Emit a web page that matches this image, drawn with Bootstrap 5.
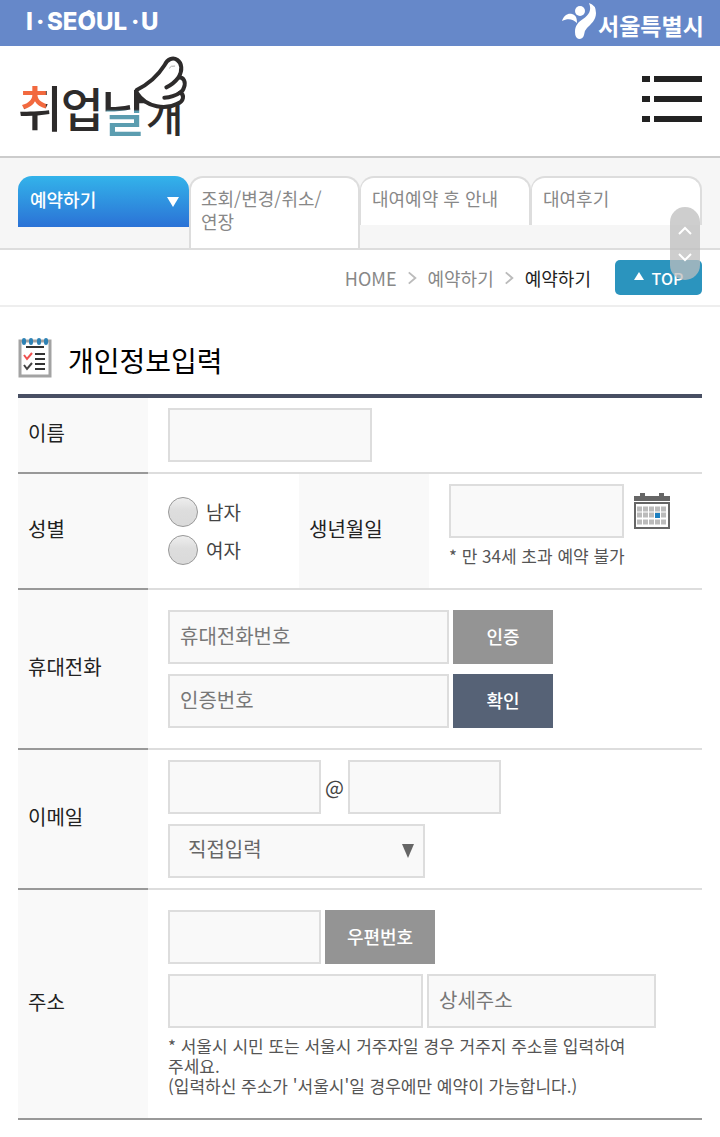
<!DOCTYPE html>
<html lang="ko">
<head>
<meta charset="utf-8">
<meta name="viewport" content="width=device-width, initial-scale=1">
<title>취업날개 - 예약하기</title>
<link href="https://cdn.jsdelivr.net/npm/bootstrap@5.3.0/dist/css/bootstrap.min.css" rel="stylesheet">
<style>
  body { font-family: "Noto Sans CJK KR", sans-serif; font-size: 20px; line-height: 24px; color: #444; background: #fff; }
  a { text-decoration: none; }
  .gutter { padding-left: 18px; padding-right: 18px; }
  .city-bar { background: #6688c9; height: 46px; }
  .city-bar svg, .brand-row svg, .page-title svg, .cal-btn svg { display: block; overflow: visible; }
  .brand-row { height: 112px; border-bottom: 2px solid #ccc; }
  .menu-btn { border: 0; background: none; padding: 0 0 4px; }
  .tab-strip { background: #f6f6f6; border-bottom: 2px solid #ddd; padding-top: 18px; min-height: 92px; }
  .tab-item { flex: 1 1 0; min-height: 49px; padding: 9px 10px; background: #fff; border: 2px solid #ddd; border-bottom: 0; border-radius: 14px 14px 0 0; font-size: 18px; line-height: 23px; color: #888; }
  .tab-item + .tab-item + .tab-item { border-left-width: 1px; padding-left: 11px; }
  .tab-item.tall { min-height: 72px; }
  .tab-item.on { min-height: 51px; border: 0; padding: 12px; color: #fff; font-weight: 500; background: linear-gradient(#33b3ea, #2b72d6); }
  .arrow-down { border: 6px solid transparent; border-top: 10px solid #fff; border-bottom: 0; margin: 9px -2px 0 0; }
  .crumb-row { height: 57px; border-bottom: 2px solid #eee; font-size: 18px; }
  .crumb-row a { color: #888; }
  .crumb-row .now { color: #222; }
  .top-btn { width: 87px; height: 35px; border-radius: 5px; background: #2b94be; color: #fff; font-size: 16px; font-weight: 500; border: 0; }
  .arrow-up { border: 5px solid transparent; border-bottom: 8px solid #fff; border-top: 0; margin-bottom: 4px; }
  .page-title { color: #000; font-size: 28px; font-weight: 400; line-height: 42px; border-bottom: 4px solid #484f63; padding: 30px 0 15px; }
  .page-title span { padding-top: 4px; line-height: 38px; }
  .form-grid { table-layout: fixed; color: #444; }
  .form-grid th { background: #f9f9f9; color: #222; font-weight: 400; padding: 0 10px 4px; vertical-align: middle; border-bottom: 2px solid #ddd; }
  .form-grid th:first-child { border-bottom-color: #999; }
  .form-grid td { padding: 10px 0 10px 20px; vertical-align: middle; border-bottom: 2px solid #ddd; }
  .form-grid td.roomy { padding-top: 20px; padding-bottom: 20px; }
  .form-grid td.birth-cell { padding-bottom: 22px; }
  .form-grid tr:last-child > * { border-bottom-color: #999; }
  .form-grid .form-control, .form-grid .form-select { height: 54px; padding: 0 10px 4px; border: 2px solid #ddd; border-radius: 0; background: #f9f9f9; color: #666; font-size: 20px; flex: 0 1 auto; }
  .form-grid .form-control::placeholder { color: #777; opacity: 1; }
  .form-grid .form-select { padding-left: 18px; }
  .w-name { width: 204px; } .w-birth { width: 175px; } .w-phone { width: 281px; }
  .w-short { width: 153px; } .w-addr { width: 255px; } .w-detail { width: 229px; }
  .line-gap { gap: 4px; }
  .rows-gap { gap: 10px; }
  .act-btn { height: 54px; width: 100px; border: 0; border-radius: 0; background: #949494; color: #fff; font-size: 18px; font-weight: 500; padding: 0 0 2px; }
  .act-btn.wide { width: 110px; }
  .act-btn.dark { background: #566276; }
  .sex-opt { gap: 8px; height: 38px; font-size: 19px; }
  .sex-opt input { appearance: none; width: 30px; height: 30px; margin: 0; border: 1px solid #999; border-radius: 50%; background: linear-gradient(#eee, #ddd 45%, #dadada); }
  .hint { font-size: 17px; line-height: 20px; color: #555; margin: 0; }
  .hint-addr { margin: -2px 0 2px; }
  .pick { width: 257px; }
  .pick .caret { right: 11px; top: 20px; border: 6px solid transparent; border-top: 14px solid #666; border-bottom: 0; pointer-events: none; }
  .cal-btn { border: 0; background: none; padding: 0; }
  .scroll-pill { right: 20px; top: 207px; width: 30px; height: 73px; border-radius: 15px; background: rgba(190,190,190,.75); padding: 19px 0 18px; z-index: 5; }
</style>
</head>
<body>
<div class="city-bar d-flex justify-content-between">
  <a href="#" aria-label="I SEOUL U">
    <svg width="170" height="46" viewBox="0 0 170 46"><text y="30" fill="#fff" font-family="Inter, sans-serif" font-weight="800" font-size="24"><tspan x="26">I</tspan><tspan x="36">·</tspan><tspan x="47">SEOUL</tspan><tspan x="131">·</tspan><tspan x="141">U</tspan></text><path d="M84 14l5-3 5 3" fill="none" stroke="#fff" stroke-width="2"/></svg>
  </a>
  <a href="#" aria-label="서울특별시">
    <svg width="160" height="46" viewBox="0 0 160 46">
      <g fill="#fff"><circle cx="20" cy="11" r="5"/><path d="M2 21C4 15 8 13 12 14C16 15 17 18 17 23C13 19 8 18 2 21Z"/><path d="M29 3Q36 5 36 13C36 20 31 24 27 28Q24 31 24 35Q23 39 19 39Q15 38 15 32C15 26 18 22 23 19C29 15 32 10 29 3Z"/></g>
      <text x="38" y="35" fill="#fff" font-family="Noto Sans CJK KR, sans-serif" font-weight="700" font-size="23">서울특별시</text>
    </svg>
  </a>
</div>

<header class="brand-row gutter d-flex justify-content-between">
  <a href="#" class="mt-2" aria-label="취업날개">
    <svg width="172" height="96" viewBox="54 162 516 288">
      <defs>
        <pattern id="ink" patternUnits="userSpaceOnUse" x="0" y="0" width="700" height="500">
          <rect width="700" height="500" fill="#2d2b2b"/>
          <rect x="40" y="200" width="98" height="127" fill="#f2693f"/>
          <rect x="318" y="331" width="118" height="100" fill="#5b9db0"/>
        </pattern>
      </defs>
      <g fill="url(#ink)" font-family="Noto Sans CJK KR, sans-serif" font-weight="500">
        <text x="54" y="380" font-size="146">취<tspan x="182" font-size="140">업</tspan><tspan x="304" y="395" font-size="150">날</tspan><tspan x="438" y="397" font-size="122">개</tspan></text>
      </g>
      <g fill="#fff" stroke="#2d2b2b" stroke-width="12" stroke-linecap="round" stroke-linejoin="round">
        <path d="M410 270C450 250 475 225 494 195C502 178 518 170 532 180C546 190 548 210 536 232C552 232 558 246 552 262C550 270 545 276 540 278C554 284 552 304 532 311C500 328 440 326 410 278Z"/>
        <path d="M536 232Q520 253 499 262M540 278Q520 292 493 293" fill="none"/>
        <path d="M508 204Q512 196 524 198" fill="none" stroke="#aaa" stroke-width="3"/>
      </g>
    </svg>
  </a>
  <button class="menu-btn" aria-label="메뉴">
    <svg width="60" height="48" viewBox="2 0 60 48" fill="#222"><path d="M2 1h8v6H2zM14 1h48v6H14zM2 21h8v6H2zM14 21h48v6H14zM2 41h8v6H2zM14 41h48v6H14z"/></svg>
  </button>
</header>

<nav class="tab-strip gutter d-flex align-items-start" aria-label="예약 메뉴">
  <a href="#" class="tab-item on d-flex justify-content-between align-items-start">예약하기 <span class="arrow-down"></span></a>
  <a href="#" class="tab-item tall">조회/변경/취소/<br>연장</a>
  <a href="#" class="tab-item">대여예약 후 안내</a>
  <a href="#" class="tab-item">대여후기</a>
</nav>

<div class="crumb-row gutter d-flex justify-content-end align-items-center">
  <a href="#">HOME</a>
  <svg class="mx-2" width="15" height="14" viewBox="0 0 16 14" fill="none" stroke="#bbb" stroke-width="2"><path d="M4 1l7 6-7 6"/></svg>
  <a href="#">예약하기</a>
  <svg class="mx-2" width="15" height="14" viewBox="0 0 16 14" fill="none" stroke="#bbb" stroke-width="2"><path d="M4 1l7 6-7 6"/></svg>
  <a href="#" class="now">예약하기</a>
  <button class="top-btn d-flex align-items-center justify-content-center ms-4 gap-2"><span class="arrow-up"></span>TOP</button>
</div>

<div class="scroll-pill position-absolute d-flex flex-column justify-content-between align-items-center">
  <svg width="14" height="9" viewBox="0 0 14 9" fill="none" stroke="#fff" stroke-width="2"><path d="M1 8l6-6 6 6"/></svg>
  <svg width="14" height="9" viewBox="0 0 14 9" fill="none" stroke="#fff" stroke-width="2"><path d="M1 1l6 6 6-6"/></svg>
</div>

<main class="gutter">
  <h1 class="page-title d-flex align-items-center gap-3 mb-0">
    <svg width="34" height="42" viewBox="0 0 34 42">
      <path d="M2 4h30v35H2z" fill="#fff" stroke="#a3a3a3" stroke-width="3"/>
      <path d="M6 3v3M13 3v3M21 3v3M28 3v3" stroke="#2d82b5" stroke-width="4" stroke-linecap="round"/>
      <path d="M8 10h18M17 17h10M17 22h10M17 27h10M17 32h10" stroke="#333" stroke-width="2"/>
      <path d="M6 18l3 4 5-6" fill="none" stroke="#f0504f" stroke-width="2"/>
      <path d="M6 28l3 4 5-6" fill="none" stroke="#444" stroke-width="2"/>
    </svg>
    <span>개인정보입력</span>
  </h1>
  <form>
  <table class="form-grid w-100">
    <colgroup><col style="width:130px"><col style="width:151px"><col style="width:130px"><col></colgroup>
    <tr>
      <th scope="row"><label for="name">이름</label></th>
      <td colspan="3"><input id="name" class="form-control w-name"></td>
    </tr>
    <tr>
      <th scope="row">성별</th>
      <td>
        <label class="sex-opt d-flex align-items-center"><input type="radio" name="sex">남자</label>
        <label class="sex-opt d-flex align-items-center"><input type="radio" name="sex">여자</label>
      </td>
      <th scope="row"><label for="birth">생년월일</label></th>
      <td class="birth-cell">
        <div class="d-flex align-items-center rows-gap">
          <input id="birth" class="form-control w-birth">
          <button type="button" class="cal-btn" aria-label="달력">
            <svg width="36" height="36" viewBox="0 0 36 36">
              <path d="M0 3h6V0h5v3h14V0h5v3h6v5H0z" fill="#666"/>
              <path d="M1 10h34v25H1z" fill="#fff" stroke="#666" stroke-width="2"/>
              <path d="M3 16h30M3 22h30M3 29h30" stroke="#bbb" stroke-width="5" stroke-dasharray="5 1"/>
              <path d="M21 20h5v5h-5z" fill="#1c7fc0"/>
            </svg>
          </button>
        </div>
        <p class="hint pt-2">* 만 34세 초과 예약 불가</p>
      </td>
    </tr>
    <tr>
      <th scope="row"><label for="phone">휴대전화</label></th>
      <td colspan="3" class="roomy">
        <div class="d-flex flex-column rows-gap">
          <div class="d-flex line-gap"><input id="phone" type="tel" class="form-control w-phone" placeholder="휴대전화번호"><button type="button" class="btn act-btn">인증</button></div>
          <div class="d-flex line-gap"><input class="form-control w-phone" placeholder="인증번호" aria-label="인증번호"><button type="button" class="btn act-btn dark">확인</button></div>
        </div>
      </td>
    </tr>
    <tr>
      <th scope="row"><label for="mail">이메일</label></th>
      <td colspan="3">
        <div class="d-flex flex-column rows-gap">
          <div class="d-flex align-items-center line-gap"><input id="mail" class="form-control w-short"><span>@</span><input class="form-control w-short" aria-label="이메일 도메인"></div>
          <div class="pick position-relative">
            <select class="form-select" aria-label="도메인 선택"><option>직접입력</option></select>
            <span class="caret position-absolute"></span>
          </div>
        </div>
      </td>
    </tr>
    <tr>
      <th scope="row"><label for="zip">주소</label></th>
      <td colspan="3" class="roomy">
        <div class="d-flex flex-column rows-gap">
          <div class="d-flex line-gap"><input id="zip" class="form-control w-short"><button type="button" class="btn act-btn wide">우편번호</button></div>
          <div class="d-flex line-gap"><input class="form-control w-addr" aria-label="기본주소"><input class="form-control w-detail" placeholder="상세주소" aria-label="상세주소"></div>
          <p class="hint hint-addr">* 서울시 시민 또는 서울시 거주자일 경우 거주지 주소를 입력하여<br>주세요.<br>(입력하신 주소가 '서울시'일 경우에만 예약이 가능합니다.)</p>
        </div>
      </td>
    </tr>
  </table>
  </form>
</main>
<script src="https://cdn.jsdelivr.net/npm/bootstrap@5.3.0/dist/js/bootstrap.bundle.min.js"></script>
</body>
</html>
